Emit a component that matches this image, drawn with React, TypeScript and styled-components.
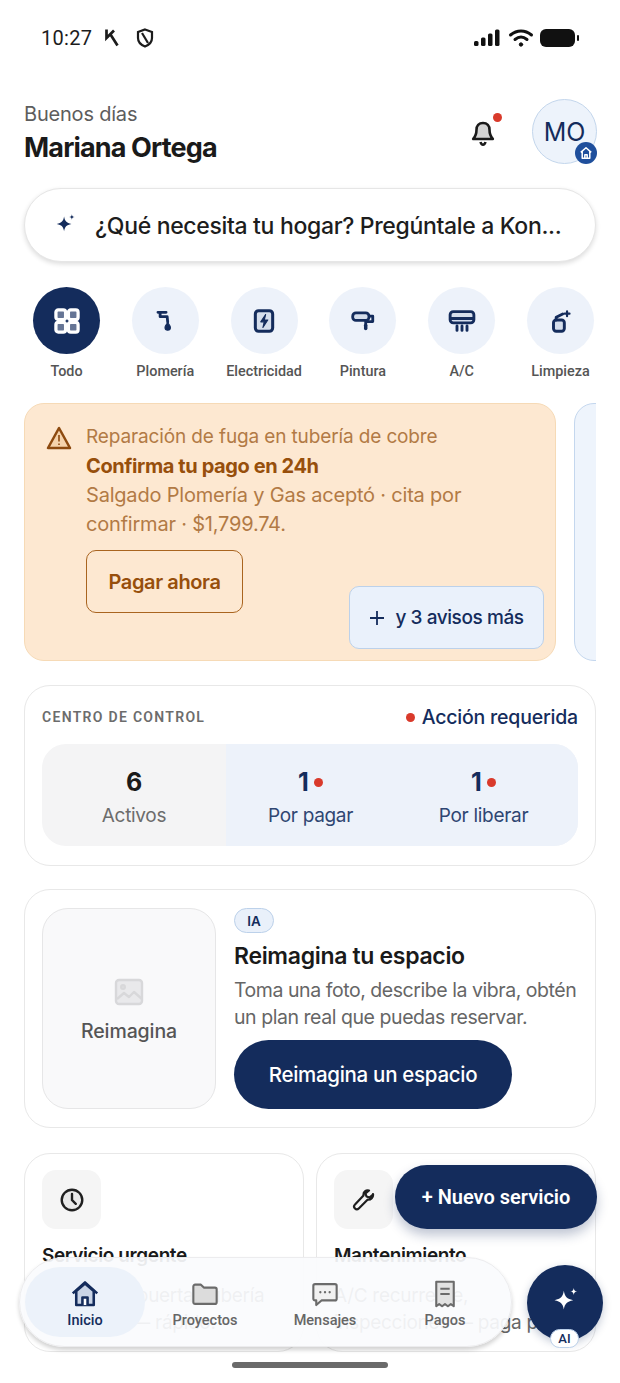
import React from 'react';
import styled, { createGlobalStyle } from 'styled-components';

const navy = '#142c5c';
const red = '#d93a2b';
const sans = `Inter, "Noto Sans", sans-serif`;
const roboto = `Roboto, "Liberation Sans", sans-serif`;

const GlobalStyle = createGlobalStyle`
  html, body { margin: 0; padding: 0; background: #fff; }
  * { box-sizing: border-box; }
`;

const Screen = styled.div`
  position: relative;
  width: 620px;
  height: 1383px;
  overflow: hidden;
  background: #fff;
  font-family: ${sans};
  color: #1a1a1a;
`;

const StatusBar = styled.div`
  height: 75px;
  padding: 0 40px 0 41px;
  display: flex;
  align-items: center;
  font-family: ${roboto};
  font-size: 20px;
  color: #1c1c1c;
`;
const StatusTime = styled.span`
  letter-spacing: 0.3px;
  margin-right: -1px;
`;
const StatusLeft = styled.div`
  display: flex;
  align-items: center;
  gap: 12px;
  flex: 1;
`;
const StatusRight = styled.div`
  display: flex;
  align-items: center;
  gap: 6px;
`;

const Header = styled.header`
  height: 113px;
  padding: 24px 23px 0 24px;
  display: flex;
  align-items: flex-start;
  justify-content: space-between;
`;
const Greeting = styled.div`
  display: flex;
  flex-direction: column;
  padding-top: 2px;
`;
const Hello = styled.span`
  font-size: 20px;
  line-height: 26px;
  letter-spacing: -0.2px;
  color: #5d5d5d;
`;
const Name = styled.span`
  font-size: 27px;
  line-height: 36px;
  margin-top: 3px;
  font-weight: 700;
  letter-spacing: -0.85px;
  color: #1a1a1a;
`;
const HeaderActions = styled.div`
  display: flex;
  align-items: flex-start;
  gap: 37px;
`;
const BellWrap = styled.div`
  position: relative;
  width: 24px;
  height: 26px;
  margin-top: 22px;
`;
const BellDot = styled.span`
  position: absolute;
  top: -8px;
  right: -7px;
  width: 9px;
  height: 9px;
  border-radius: 50%;
  background: ${red};
`;
const Avatar = styled.div`
  position: relative;
  width: 65px;
  height: 65px;
  border-radius: 50%;
  background: #edf3fb;
  border: 1px solid #c3d6ec;
  display: flex;
  align-items: center;
  justify-content: center;
  font-size: 25px;
  font-weight: 400;
  color: ${navy};
`;
const AvatarBadge = styled.span`
  position: absolute;
  right: -1px;
  bottom: -1px;
  width: 22px;
  height: 22px;
  border-radius: 50%;
  background: #1f4f9c;
  display: flex;
  align-items: center;
  justify-content: center;
`;

const SearchPill = styled.div`
  margin: 0 24px;
  height: 74px;
  border-radius: 37px;
  background: #fff;
  border: 1px solid #e6e6e6;
  box-shadow: 0 2px 5px rgba(0, 0, 0, 0.14);
  display: flex;
  align-items: center;
  padding-left: 29px;
  gap: 19px;
`;
const SearchSpark = styled.span`
  display: flex;
  margin-bottom: 5px;
`;
const SearchText = styled.span`
  padding-top: 1px;
  font-size: 23px;
  font-weight: 500;
  letter-spacing: -0.33px;
  color: #1d1d1d;
`;

const Categories = styled.div`
  margin-top: 25px;
  padding: 0 0 0 33px;
  display: flex;
  gap: 31.8px;
`;
const Category = styled.div`
  width: 67px;
  display: flex;
  flex-direction: column;
  align-items: center;
`;
const CategoryCircle = styled.div<{ $active?: boolean }>`
  width: 67px;
  height: 67px;
  border-radius: 50%;
  background: ${p => (p.$active ? navy : '#edf2fa')};
  display: flex;
  align-items: center;
  justify-content: center;
`;
const CategoryLabel = styled.span`
  margin-top: 9px;
  font-family: ${roboto};
  font-size: 14.4px;
  line-height: 17px;
  font-weight: 500;
  white-space: nowrap;
  color: #555;
`;

const Carousel = styled.div`
  margin: 23px 24px 0;
  display: flex;
  gap: 18px;
  overflow: hidden;
`;
const AlertCard = styled.div`
  flex: 0 0 532px;
  height: 258px;
  border-radius: 20px;
  background: #fde8d1;
  border: 1px solid #f6dab6;
  padding: 20px 10px 0 21px;
  display: flex;
  gap: 14px;
  position: relative;
`;
const AlertBody = styled.div`
  display: flex;
  flex-direction: column;
`;
const AlertTitle = styled.span`
  font-size: 19px;
  line-height: 26px;
  letter-spacing: -0.13px;
  color: #b27a45;
`;
const AlertHeadline = styled.span`
  font-size: 20px;
  line-height: 30px;
  margin-top: 1px;
  font-weight: 700;
  letter-spacing: -0.4px;
  color: #974f0c;
`;
const AlertText = styled.span`
  font-size: 20px;
  line-height: 29px;
  letter-spacing: -0.2px;
  color: #b27a45;
`;
const PayButton = styled.button`
  align-self: flex-start;
  margin-top: 11px;
  width: 157px;
  height: 63px;
  border-radius: 10px;
  border: 1.8px solid #a9641f;
  background: transparent;
  font-family: ${sans};
  font-size: 20px;
  font-weight: 600;
  letter-spacing: -0.4px;
  color: #974f0c;
`;
const MoreButton = styled.div`
  position: absolute;
  right: 11px;
  bottom: 11px;
  width: 195px;
  height: 63px;
  border-radius: 10px;
  background: #eaf1fb;
  border: 1.5px solid #bcd1ea;
  display: flex;
  align-items: center;
  justify-content: center;
  gap: 10px;
  font-size: 19px;
  font-weight: 500;
  letter-spacing: -0.42px;
  color: ${navy};
`;
const NextAlert = styled.div`
  flex: 0 0 60px;
  height: 258px;
  border-radius: 20px;
  background: #eef4fc;
  border: 1.5px solid #c4d7ee;
`;

const Card = styled.section<{ $top: number }>`
  margin: ${p => p.$top}px 24px 0;
  background: #fff;
  border: 1px solid #e8e8e8;
  border-radius: 26px;
`;
const ControlCard = styled(Card)`
  height: 181px;
  padding: 19px 17px 0;
`;
const ControlHead = styled.div`
  height: 24px;
  display: flex;
  align-items: center;
  justify-content: space-between;
`;
const ControlLabel = styled.span`
  font-family: ${roboto};
  font-size: 14px;
  font-weight: 600;
  letter-spacing: 1.3px;
  color: #6c6c6c;
`;
const ActionLabel = styled.span`
  display: flex;
  align-items: center;
  gap: 7px;
  font-size: 19.5px;
  font-weight: 500;
  letter-spacing: -0.2px;
  color: ${navy};
`;
const RedDot = styled.span`
  width: 9px;
  height: 9px;
  border-radius: 50%;
  background: ${red};
`;
const Stats = styled.div`
  margin-top: 15px;
  height: 102px;
  border-radius: 24px;
  background: #f4f4f5;
  display: grid;
  grid-template-columns: 184px 169px 183px;
  overflow: hidden;
`;
const Stat = styled.div<{ $accent?: boolean; $inset?: number }>`
  display: flex;
  flex-direction: column;
  align-items: center;
  padding: 21px ${p => p.$inset ?? 0}px 0 0;
  background: ${p => (p.$accent ? '#edf2fa' : 'transparent')};
  color: ${p => (p.$accent ? navy : '#1a1a1a')};
`;
const StatNumber = styled.span`
  height: 34px;
  display: flex;
  align-items: center;
  gap: 5px;
  font-size: 25px;
  font-weight: 700;
`;
const StatLabel = styled.span<{ $accent?: boolean }>`
  margin-top: 5px;
  font-size: 19px;
  line-height: 24px;
  letter-spacing: -0.3px;
  color: ${p => (p.$accent ? '#2f4672' : '#6c6c6c')};
`;

const ReimagineCard = styled(Card)`
  height: 239px;
  padding: 18px 17px 0;
  display: flex;
  gap: 18px;
`;
const Thumb = styled.div`
  flex: 0 0 174px;
  height: 201px;
  border-radius: 26px;
  background: #f9f9fa;
  border: 1px solid #e6e6e7;
  display: flex;
  flex-direction: column;
  align-items: center;
  justify-content: center;
  gap: 13px;
  padding-top: 3px;
  font-size: 19.5px;
  font-weight: 500;
  letter-spacing: -0.1px;
  color: #555;
`;
const ReimagineBody = styled.div`
  display: flex;
  flex-direction: column;
  align-items: flex-start;
`;
const Tag = styled.span`
  width: 40px;
  height: 25px;
  border-radius: 13px;
  background: #e9f0fa;
  border: 1px solid #bcd1ea;
  display: flex;
  align-items: center;
  justify-content: center;
  font-size: 13.5px;
  font-weight: 600;
  color: ${navy};
`;
const ReimagineTitle = styled.h2`
  margin: 7px 0 0;
  font-size: 23px;
  line-height: 32px;
  font-weight: 600;
  letter-spacing: -0.32px;
  color: #1a1a1a;
`;
const ReimagineText = styled.p`
  margin: 5px 0 0;
  font-size: 19.5px;
  line-height: 26.5px;
  letter-spacing: -0.45px;
  white-space: nowrap;
  color: #666;
`;
const ReimagineButton = styled.div`
  margin-top: 10px;
  width: 278px;
  height: 69px;
  border-radius: 35px;
  background: ${navy};
  display: flex;
  align-items: center;
  justify-content: center;
  font-size: 20.5px;
  font-weight: 500;
  letter-spacing: -0.3px;
  color: #fff;
`;

const ServiceRow = styled.div`
  margin: 25px 24px 0;
  display: grid;
  grid-template-columns: 280px 280px;
  gap: 12px;
`;
const ServiceCard = styled.div`
  height: 199px;
  border-radius: 26px;
  border: 1px solid #e8e8e8;
  background: #fff;
  padding: 16px 17px 0;
  overflow: hidden;
`;
const ServiceIcon = styled.div`
  width: 59px;
  height: 59px;
  border-radius: 14px;
  background: #f5f5f5;
  display: flex;
  align-items: center;
  justify-content: center;
`;
const ServiceTitle = styled.div`
  margin-top: 13px;
  font-size: 19px;
  line-height: 28px;
  font-weight: 600;
  letter-spacing: -0.4px;
  white-space: nowrap;
`;
const ServiceText = styled.div`
  margin-top: 12px;
  font-size: 19px;
  line-height: 27px;
  letter-spacing: -0.3px;
  white-space: nowrap;
  color: #666;
`;

const TabBar = styled.nav`
  position: absolute;
  left: 19px;
  top: 1257px;
  width: 493px;
  height: 90px;
  border-radius: 45px;
  background: rgba(250, 251, 253, 0.93);
  border: 1px solid #ececee;
  box-shadow: 0 3px 4px rgba(0, 0, 0, 0.18);
  display: flex;
  align-items: center;
  padding: 0 0 0 5px;
`;
const Tab = styled.div<{ $active?: boolean; $width: number }>`
  width: ${p => p.$width}px;
  height: 70px;
  border-radius: 35px;
  background: ${p => (p.$active ? '#ecf2fa' : 'transparent')};
  display: flex;
  flex-direction: column;
  align-items: center;
  justify-content: flex-end;
  padding-bottom: 8px;
  gap: 4px;
  font-family: ${roboto};
  font-size: 14.5px;
  line-height: 17px;
  font-weight: 500;
  color: ${p => (p.$active ? navy : '#666')};
`;
const NewServiceFab = styled.div`
  position: absolute;
  left: 395px;
  top: 1165px;
  width: 202px;
  height: 64px;
  border-radius: 32px;
  background: ${navy};
  box-shadow: 0 6px 12px rgba(20, 44, 92, 0.28);
  display: flex;
  align-items: center;
  justify-content: center;
  font-family: ${roboto};
  font-size: 20px;
  font-weight: 600;
  color: #fff;
`;
const AiFab = styled.div`
  position: absolute;
  left: 527px;
  top: 1265px;
  width: 76px;
  height: 76px;
  border-radius: 50%;
  background: ${navy};
  box-shadow: 0 3px 8px rgba(20, 44, 92, 0.25);
  display: flex;
  align-items: center;
  justify-content: center;
`;
const AiSpark = styled.span`
  display: flex;
  margin-bottom: 8px;
`;
const AiBadge = styled.span`
  position: absolute;
  left: 23px;
  bottom: -7px;
  width: 29px;
  height: 19px;
  border-radius: 10px;
  background: #fff;
  border: 1px solid #bcd1ea;
  display: flex;
  align-items: center;
  justify-content: center;
  font-family: ${roboto};
  font-size: 13px;
  font-weight: 500;
  color: ${navy};
`;
const HomeIndicator = styled.div`
  position: absolute;
  left: 232px;
  top: 1362px;
  width: 156px;
  height: 6px;
  border-radius: 3px;
  background: #6a6a6a;
`;

const Sparkle = ({ color, size }: { color: string; size: number }) => (
  <svg width={size} height={size} viewBox="0 0 24 24" fill={color}>
    <path d="M11 5c.8 5 2.600 7 8 8-5.400 1-7.200 3-8 8-.8-5-2.600-7-8-8 5.400-1 7.200-3 8-8z" />
    <path d="M19.500 2.500c.3 2 .9 2.700 3 3-2.100 .3-2.700 1-3 3-.3-2-.9-2.700-3-3 2.100-.3 2.700-1 3-3z" />
  </svg>
);

const IconStroke = ({ children, size = 24, color = navy, sw = 2 }: { children: React.ReactNode; size?: number; color?: string; sw?: number }) => (
  <svg width={size} height={size} viewBox="0 0 24 24" fill="none" stroke={color} strokeWidth={sw} strokeLinecap="round" strokeLinejoin="round">
    {children}
  </svg>
);

const categories = [
  {
    label: 'Todo',
    icon: (
      <IconStroke size={28} color="#fff" sw={2.800}>
        <rect x="2.500" y="2.500" width="8.300" height="8.300" rx="2" fill="rgba(255,255,255,.35)" />
        <rect x="13.200" y="2.500" width="8.300" height="8.300" rx="2" fill="rgba(255,255,255,.35)" />
        <rect x="2.500" y="13.200" width="8.300" height="8.300" rx="2" fill="rgba(255,255,255,.35)" />
        <rect x="13.200" y="13.200" width="8.300" height="8.300" rx="2" fill="rgba(255,255,255,.35)" />
      </IconStroke>
    ),
  },
  {
    label: 'Plomería',
    icon: (
      <IconStroke size={26} sw={2.600}>
        <path d="M5.500 4h7.500M7.500 4v4h6.500l.5 5" />
        <path d="M14.500 13.500c1.800 2.300 2.500 3.300 2.500 4.500a2.500 2.500 0 0 1-5 0c0-1.200.7-2.200 2.500-4.500z" fill={navy} strokeWidth={1} />
      </IconStroke>
    ),
  },
  {
    label: 'Electricidad',
    icon: (
      <IconStroke size={26} sw={2.800}>
        <rect x="4" y="2.500" width="16" height="19" rx="3" fill="#d5deec" />
        <path d="M13.500 6 9 12.800h3.200L11 18l4.500-7h-3.200z" fill={navy} strokeWidth={1} />
      </IconStroke>
    ),
  },
  {
    label: 'Pintura',
    icon: (
      <IconStroke size={26} sw={2.600}>
        <rect x="2.500" y="4.500" width="15" height="7" rx="3" fill="#d5deec" />
        <path d="M18 7.500h3v5h-6.500V15" />
        <path d="M14.500 16v3" strokeWidth={3.200} />
      </IconStroke>
    ),
  },
  {
    label: 'A/C',
    icon: (
      <IconStroke size={30} sw={2.300}>
        <rect x="2.500" y="4.500" width="19" height="9" rx="2.500" fill="#d5deec" />
        <path d="M3 10h18M8 16v3.500M12 16v3.500M16 16v3.500" />
      </IconStroke>
    ),
  },
  {
    label: 'Limpieza',
    icon: (
      <IconStroke size={26} sw={2.700}>
        <rect x="6" y="11" width="10" height="10.500" rx="2.500" fill="#d5deec" />
        <path d="M8.500 11V8.500l6-3" />
        <path d="M18.500 3v4.500M16.300 5.200h4.500" strokeWidth={2} />
      </IconStroke>
    ),
  },
];

export default function App() {
  return (
    <Screen>
      <GlobalStyle />
      <StatusBar>
        <StatusLeft>
          <StatusTime>10:27</StatusTime>
          <svg width="18" height="19" viewBox="0 0 18 19" fill="none" stroke="#1c1c1c" strokeWidth="2.700">
            <path d="M3.500 1.500v8.500L11 2.500M7.500 6.500l7 11" />
          </svg>
          <svg width="18" height="20" viewBox="0 0 18 20" fill="none" stroke="#1c1c1c" strokeWidth="2.200" style={{ marginLeft: 3 }}>
            <path d="M9 1.500 16 4v6c0 4-3 7-7 8.500C5 17 2 14 2 10V4z" />
            <path d="M6 5l6 10" />
          </svg>
        </StatusLeft>
        <StatusRight>
          <svg width="28" height="20" viewBox="0 0 28 20" fill="#111">
            <rect x="0" y="13" width="4.500" height="5" rx="1.500" />
            <rect x="7" y="9.500" width="4.500" height="8.500" rx="1.500" />
            <rect x="14" y="5.500" width="4.500" height="12.500" rx="1.500" />
            <rect x="21" y="1.500" width="4.500" height="16.500" rx="1.500" />
          </svg>
          <svg width="26" height="20" viewBox="0 0 26 20" fill="none" stroke="#111" strokeWidth="3" strokeLinecap="round">
            <path d="M2.500 7C9 1.500 17 1.500 23.500 7" />
            <path d="M7 11.500c4-3.300 8-3.300 12 0" />
            <circle cx="13" cy="16.500" r="1.700" fill="#111" strokeWidth="1" />
          </svg>
          <svg width="40" height="20" viewBox="0 0 40 20" fill="#111">
            <rect x="0" y="1" width="35" height="18" rx="6" />
            <rect x="37" y="7" width="2" height="6" rx="1" />
          </svg>
        </StatusRight>
      </StatusBar>

      <Header>
        <Greeting>
          <Hello>Buenos días</Hello>
          <Name>Mariana Ortega</Name>
        </Greeting>
        <HeaderActions>
          <BellWrap>
            <svg width="24" height="26" viewBox="0 0 24 26" fill="#d4d4d4" stroke="#1a1a1a" strokeWidth="2.600" strokeLinejoin="round">
              <path d="M12 2c-4.200 0-6.500 3-6.500 6.800 0 4.200-1 6.700-3.300 9.200h19.600c-2.300-2.500-3.300-5-3.300-9.200C18.500 5 16.200 2 12 2z" />
              <path d="M9.500 21c.5 1.800 1.300 2.700 2.500 2.700s2-.9 2.500-2.700" fill="none" />
            </svg>
            <BellDot />
          </BellWrap>
          <Avatar>
            MO
            <AvatarBadge>
              <svg width="14" height="14" viewBox="0 0 24 24" fill="none" stroke="#fff" strokeWidth="2.600" strokeLinejoin="round">
                <path d="M3 11 12 3l9 8M5.500 9.500V21h13V9.500M10 21v-6h4v6" />
              </svg>
            </AvatarBadge>
          </Avatar>
        </HeaderActions>
      </Header>

      <SearchPill>
        <SearchSpark>
          <Sparkle color={navy} size={22} />
        </SearchSpark>
        <SearchText>¿Qué necesita tu hogar? Pregúntale a Kon...</SearchText>
      </SearchPill>

      <Categories>
        {categories.map((c, i) => (
          <Category key={c.label}>
            <CategoryCircle $active={i === 0}>{c.icon}</CategoryCircle>
            <CategoryLabel>{c.label}</CategoryLabel>
          </Category>
        ))}
      </Categories>

      <Carousel>
        <AlertCard>
          <svg width="26" height="24" viewBox="0 0 26 24" fill="none" stroke="#8d4a10" strokeWidth="2.500" strokeLinejoin="round" style={{ flex: '0 0 26px', marginTop: 2 }}>
            <path d="M13 2 2 22h22z" fill="#f5d3ad" />
            <path d="M13 9v6.500M13 17.500v1.500" strokeWidth="1.600" />
          </svg>
          <AlertBody>
            <AlertTitle>Reparación de fuga en tubería de cobre</AlertTitle>
            <AlertHeadline>Confirma tu pago en 24h</AlertHeadline>
            <AlertText>
              Salgado Plomería y Gas aceptó · cita por
              <br />
              confirmar · $1,799.74.
            </AlertText>
            <PayButton>Pagar ahora</PayButton>
          </AlertBody>
          <MoreButton>
            <svg width="16" height="16" viewBox="0 0 16 16" stroke={navy} strokeWidth="1.800">
              <path d="M8 1v14M1 8h14" />
            </svg>
            y 3 avisos más
          </MoreButton>
        </AlertCard>
        <NextAlert />
      </Carousel>

      <ControlCard $top={24}>
        <ControlHead>
          <ControlLabel>CENTRO DE CONTROL</ControlLabel>
          <ActionLabel>
            <RedDot />
            Acción requerida
          </ActionLabel>
        </ControlHead>
        <Stats>
          <Stat>
            <StatNumber>6</StatNumber>
            <StatLabel>Activos</StatLabel>
          </Stat>
          <Stat $accent>
            <StatNumber>
              1<RedDot />
            </StatNumber>
            <StatLabel $accent>Por pagar</StatLabel>
          </Stat>
          <Stat $accent $inset={6}>
            <StatNumber>
              1<RedDot />
            </StatNumber>
            <StatLabel $accent>Por liberar</StatLabel>
          </Stat>
        </Stats>
      </ControlCard>

      <ReimagineCard $top={23}>
        <Thumb>
          <svg width="30" height="28" viewBox="0 0 30 28" fill="#e9e9eb" stroke="#d8d8da" strokeWidth="2.400" strokeLinejoin="round">
            <rect x="2" y="2" width="26" height="24" rx="3" />
            <circle cx="9" cy="9" r="1.800" />
            <path d="M3 21l7-6 5 4 5-5 8 7" fill="none" />
          </svg>
          Reimagina
        </Thumb>
        <ReimagineBody>
          <Tag>IA</Tag>
          <ReimagineTitle>Reimagina tu espacio</ReimagineTitle>
          <ReimagineText>
            Toma una foto, describe la vibra, obtén
            <br />
            un plan real que puedas reservar.
          </ReimagineText>
          <ReimagineButton>Reimagina un espacio</ReimagineButton>
        </ReimagineBody>
      </ReimagineCard>

      <ServiceRow>
        <ServiceCard>
          <ServiceIcon>
            <svg width="26" height="26" viewBox="0 0 24 24" fill="none" stroke="#1f1f1f" strokeWidth="2.200" strokeLinecap="round">
              <circle cx="12" cy="12" r="9.500" fill="#e8e8e8" />
              <path d="M12 6.500V12l3.500 3.500" />
            </svg>
          </ServiceIcon>
          <ServiceTitle>Servicio urgente</ServiceTitle>
          <ServiceText>
            Fuga, gas, puerta, tubería
            <br />
            Llega hoy — rápido.
          </ServiceText>
        </ServiceCard>
        <ServiceCard>
          <ServiceIcon>
            <svg width="24" height="24" viewBox="0 0 24 24" fill="none" stroke="#1f1f1f" strokeWidth="2.200" strokeLinejoin="round">
              <path d="M21 6.500l-3.500 3-3-1-1-3L17 2.500c-3-.8-6 1.500-5.500 5L3 16.500c-1.500 1.500-1 3 0 4s2.700 1 4-.3l8.500-8.500c3.500 .5 6-2.500 5.500-5.700z" />
            </svg>
          </ServiceIcon>
          <ServiceTitle>Mantenimiento</ServiceTitle>
          <ServiceText>
            A/C recurrente,
            <br />
            inspecciones — paga por
          </ServiceText>
        </ServiceCard>
      </ServiceRow>

      <NewServiceFab>+ Nuevo servicio</NewServiceFab>

      <TabBar>
        <Tab $active $width={120}>
          <svg width="28" height="28" viewBox="0 0 24 24" fill="#c9d4e6" stroke={navy} strokeWidth="2.200" strokeLinejoin="round">
            <path d="M1.500 11.500 12 2l10.500 9.500" fill="none" />
            <path d="M4.500 9.500V21.500h15V9.500L12 3z" />
            <path d="M9.800 21.500v-6.500h4.400v6.500" fill="#fff" />
          </svg>
          Inicio
        </Tab>
        <Tab $width={120}>
          <svg width="28" height="28" viewBox="0 0 24 24" fill="#dcdcdc" stroke="#6b6b6b" strokeWidth="1.800" strokeLinejoin="round">
            <path d="M2 5.500a1.500 1.500 0 0 1 1.500-1.500h5L11 6.500h9.500A1.500 1.500 0 0 1 22 8v11a1.500 1.500 0 0 1-1.500 1.500h-17A1.500 1.500 0 0 1 2 19z" />
          </svg>
          Proyectos
        </Tab>
        <Tab $width={120}>
          <svg width="28" height="28" viewBox="0 0 24 24" fill="#f1f1f1" stroke="#6b6b6b" strokeWidth="1.800" strokeLinejoin="round">
            <path d="M3.500 3.500h17a1.500 1.500 0 0 1 1.500 1.500v11a1.500 1.500 0 0 1-1.500 1.500H9l-4.500 4v-4h-1A1.500 1.500 0 0 1 2 16V5a1.500 1.500 0 0 1 1.500-1.500z" />
            <path d="M8 10.500h.01M12 10.500h.01M16 10.500h.01" strokeWidth="2" strokeLinecap="round" />
          </svg>
          Mensajes
        </Tab>
        <Tab $width={120}>
          <svg width="28" height="28" viewBox="0 0 24 24" fill="#e2e2e2" stroke="#6b6b6b" strokeWidth="1.800" strokeLinejoin="round">
            <path d="M4.500 1.500h15v21l-2.500-1.800-2.500 1.800-2.500-1.800-2.500 1.800-2.500-1.800-2.500 1.800z" />
            <path d="M8 7.500h8M8 12h8" />
          </svg>
          Pagos
        </Tab>
      </TabBar>

      <AiFab>
        <AiSpark>
          <Sparkle color="#fff" size={28} />
        </AiSpark>
        <AiBadge>AI</AiBadge>
      </AiFab>

      <HomeIndicator />
    </Screen>
  );
}
